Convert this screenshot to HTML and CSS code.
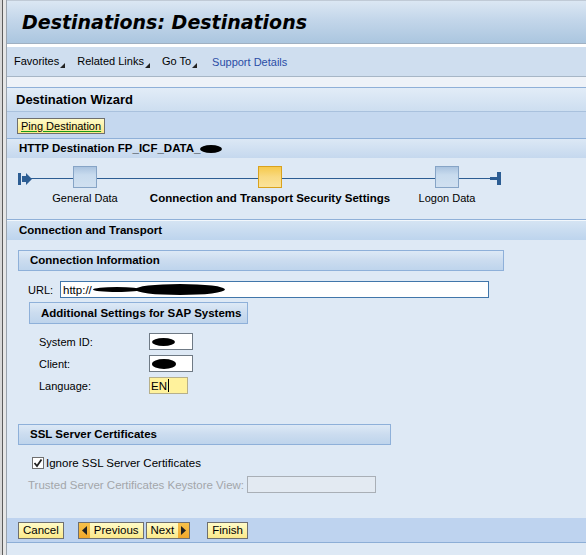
FILE: index.html
```html
<!DOCTYPE html>
<html>
<head>
<meta charset="utf-8">
<link rel="stylesheet" href="styles.css">
</head>
<body>
<div class="frame">
<div class="page">
  <div class="titlebar"><h1>Destinations: Destinations</h1></div>
  <div class="whitegap"></div>
  <div class="toolbar">
    <span class="menu">Favorites<svg class="tri" width="5" height="5" viewBox="0 0 5 5"><polygon points="5,0 5,5 0,5" fill="#222"/></svg></span>
    <span class="menu">Related Links<svg class="tri" width="5" height="5" viewBox="0 0 5 5"><polygon points="5,0 5,5 0,5" fill="#222"/></svg></span>
    <span class="menu">Go To<svg class="tri" width="5" height="5" viewBox="0 0 5 5"><polygon points="5,0 5,5 0,5" fill="#222"/></svg></span>
    <span class="link">Support Details</span>
  </div>
  <div class="spacer"></div>
  <div class="wizard-head">Destination Wizard</div>
  <div class="ping-row"><span class="btn ping"><span class="ul">Ping Destination</span></span></div>
  <div class="step-head">HTTP Destination FP_ICF_DATA_<span class="blob b-title"></span></div>
  <div class="roadmap">
    <div class="rline"></div>
    <svg class="rstart" width="14" height="12" viewBox="0 0 14 12"><rect x="0" y="0" width="3" height="12" fill="#2c5d93"/><polygon points="4,3 8,3 8,0 14,6 8,12 8,9 4,9" fill="#2c5d93"/></svg>
    <div class="step s1"><div class="sbox"></div><div class="slabel">General Data</div></div>
    <div class="step s2"><div class="sbox cur"></div><div class="slabel bold">Connection and Transport Security Settings</div></div>
    <div class="step s3"><div class="sbox"></div><div class="slabel">Logon Data</div></div>
    <svg class="rend" width="12" height="13" viewBox="0 0 12 13"><rect x="0" y="5" width="8" height="3" fill="#2c5d93"/><rect x="7" y="0" width="4" height="13" fill="#2c5d93"/></svg>
  </div>
  <div class="section-head">Connection and Transport</div>
  <div class="content">
    <div class="ghead wide">Connection Information</div>
    <div class="url-row">
      <span class="lbl url-lbl">URL:</span>
      <span class="input url-in">http://<span class="blob b-u1"></span><span class="blob b-u2"></span></span>
    </div>
    <div class="ghead sub">Additional Settings for SAP Systems</div>
    <div class="fields">
      <div class="frow"><span class="lbl flbl">System ID:</span><span class="input small"><span class="blob b-s"></span></span></div>
      <div class="frow"><span class="lbl flbl">Client:</span><span class="input small"><span class="blob b-c"></span></span></div>
      <div class="frow"><span class="lbl flbl">Language:</span><span class="input lang">EN<span class="caret"></span></span></div>
    </div>
    <div class="ghead ssl">SSL Server Certificates</div>
    <div class="cb-row"><span class="cb"><svg width="10" height="10" viewBox="0 0 10 10"><polyline points="1.5,5 4,8 8.5,1.5" fill="none" stroke="#222" stroke-width="1.8"/></svg></span>Ignore SSL Server Certificates</div>
    <div class="ks-row"><span class="lbl dis">Trusted Server Certificates Keystore View:</span><span class="input disabled"></span></div>
  </div>
  <div class="footer">
    <span class="btn">Cancel</span>
    <span class="navgroup">
      <span class="btn prev"><span class="arr"><svg width="5" height="9" viewBox="0 0 5 9"><polygon points="5,0 5,9 0,4.5" fill="#222"/></svg></span>Previous</span>
      <span class="btn next">Next<span class="arr"><svg width="5" height="9" viewBox="0 0 5 9"><polygon points="0,0 0,9 5,4.5" fill="#222"/></svg></span></span>
    </span>
    <span class="btn">Finish</span>
  </div>
  <div class="bottom"></div>
</div>
</div>
</body>
</html>
```
FILE: styles.css
```css
html, body { margin: 0; padding: 0; }
body {
  background: #d8d8d8;
  font-family: "Liberation Sans", Arial, sans-serif;
  font-size: 11px;
  color: #000;
  width: 586px;
  height: 555px;
  overflow: hidden;
}
.frame {
  margin-left: 2px;
  border-left: 1px solid #5c5c5c;
  padding-left: 3px;
  background: #e6e6e6;
  height: 555px;
}
.page {
  border-left: 1px solid #9aa3ad;
  background: #dee9f5;
  height: 555px;
}
.titlebar {
  height: 42px;
  border-top: 1px solid #c0cad6;
  border-bottom: 1px solid #9fb0c2;
  background: linear-gradient(#dbe7f3, #c3d6ea 45%, #abc6df);
  display: flex;
  align-items: center;
}
.titlebar h1 {
  margin: 0 0 0 15px;
  font-family: "DejaVu Sans", Verdana, sans-serif;
  font-weight: bold;
  font-style: italic;
  font-size: 19px;
  color: #000;
}
.whitegap { height: 3px; background: #fff; }
.toolbar {
  height: 29px;
  background: #cfdeef;
  border-bottom: 1px solid #a7b6c6;
  display: flex;
  align-items: center;
  padding-left: 7px;
}
.menu { margin-right: 12px; white-space: nowrap; }
.tri { vertical-align: -3px; margin-left: 1px; }
.link { color: #2a4da6; margin-left: 3px; }
.spacer { height: 10px; background: #eef2f8; }
.wizard-head {
  border-top: 1px solid #8fb0d8;
  height: 23px;
  line-height: 23px;
  padding-left: 9px;
  font-weight: bold;
  font-size: 13px;
  background: linear-gradient(#e2ecf7, #cddef0);
}
.ping-row {
  height: 27px;
  background: #c5d8ef;
  border-top: 1px solid #a9c1dd;
  box-sizing: border-box;
  padding: 6px 0 0 10px;
}
.btn {
  display: inline-flex;
  align-items: center;
  height: 16px;
  box-sizing: border-box;
  border: 1px solid #6f6f6f;
  background: linear-gradient(#fffbc8, #fbe98a);
  padding: 0 4px;
  font-size: 11.5px;
  white-space: nowrap;
}
.ping { padding: 0 3px; font-size: 11px; }
.ul { text-decoration: underline; text-decoration-color: #1a9a1a; }
.step-head {
  height: 20px;
  box-sizing: border-box;
  border-top: 1px solid #8fb0d8;
  line-height: 19px;
  padding-left: 12px;
  font-weight: bold;
  font-size: 11.5px;
  background: linear-gradient(#dce8f5, #c5d8ee);
}
.blob {
  display: inline-block;
  background: #000;
  border-radius: 50%;
  vertical-align: middle;
}
.b-title { width: 22px; height: 8px; }
.roadmap {
  position: relative;
  height: 61px;
  display: flex;
  align-items: flex-start;
  padding-left: 11px;
  background: #dee9f5;
  border-bottom: 1px solid #8fb0d8;
}
.rline {
  position: absolute;
  left: 24px;
  width: 460px;
  top: 20px;
  height: 1px;
  background: #2c5d93;
}
.rstart { margin-top: 15px; position: relative; }
.rend { margin-top: 14px; margin-left: -2px; position: relative; }
.step {
  display: flex;
  flex-direction: column;
  align-items: center;
  position: relative;
}
.s1 { width: 106px; }
.s2 { width: 264px; }
.s3 { width: 90px; }
.sbox {
  margin-top: 8px;
  width: 22px;
  height: 20px;
  border: 1px solid #86a4c6;
  background: linear-gradient(#aac3df, #c8dbee 40%, #d0e0f0);
}
.sbox.cur {
  border-color: #d9a21e;
  background: linear-gradient(#f6c94c, #f9da82 50%, #fbe39b);
}
.slabel { margin-top: 4px; white-space: nowrap; font-size: 11px; }
.slabel.bold { font-weight: bold; font-size: 11.5px; }
.section-head {
  border-top: 1px solid #f2f7fc;
  height: 19px;
  line-height: 19px;
  padding-left: 12px;
  font-weight: bold;
  font-size: 11.5px;
  background: linear-gradient(#d5e4f3, #bdd4ed);
}
.content {
  height: 278px;
  box-sizing: border-box;
  padding: 10px 0 0 11px;
  background: #dee9f5;
}
.ghead {
  box-sizing: border-box;
  border: 1px solid #8eb0d9;
  height: 21px;
  line-height: 19px;
  padding-left: 11px;
  font-weight: bold;
  font-size: 11.5px;
  background: linear-gradient(#dde9f6, #cbdcef 50%, #bed4ec);
}
.ghead.wide { width: 486px; }
.ghead.sub { width: 219px; height: 22px; line-height: 20px; margin: 4px 0 0 11px; }
.ghead.ssl { width: 373px; margin-top: 30px; }
.url-row {
  display: flex;
  align-items: center;
  margin-top: 10px;
  height: 17px;
}
.lbl { white-space: nowrap; }
.url-lbl { width: 32px; padding-left: 10px; box-sizing: border-box; }
.input {
  display: inline-flex;
  align-items: center;
  box-sizing: border-box;
  height: 17px;
  background: #fff;
  border: 1px solid #6f7a85;
  padding-left: 2px;
  font-size: 11.5px;
}
.url-in { width: 429px; margin-left: 10px; border-color: #4176aa; }
.b-u1 { width: 48px; height: 5px; margin-left: 1px; }
.b-u2 { width: 90px; height: 11px; margin-left: -6px; }
.fields { padding: 9px 0 0 21px; }
.frow { display: flex; align-items: center; height: 17px; margin-bottom: 5px; }
.flbl { width: 110px; }
.input.small { width: 44px; }
.b-s { width: 23px; height: 8px; }
.b-c { width: 24px; height: 10px; }
.input.lang { width: 39px; background: #fff29c; border-color: #b7b08a; padding-left: 1px; }
.caret { display: inline-block; width: 1px; height: 13px; background: #000; margin-left: 1px; }
.cb-row {
  display: flex;
  align-items: center;
  margin: 11px 0 0 14px;
  height: 14px;
  font-size: 11.5px;
}
.cb {
  width: 12px;
  height: 12px;
  box-sizing: border-box;
  border: 1px solid #6f6f6f;
  background: #fff;
  display: inline-flex;
  align-items: center;
  justify-content: center;
  margin-right: 2px;
}
.ks-row { display: flex; align-items: center; margin: 6px 0 0 10px; height: 17px; }
.dis { color: #a3a6aa; width: 219px; font-size: 11.5px; }
.input.disabled { width: 129px; background: #e3eaf2; border-color: #a9afb6; }
.footer {
  height: 25px;
  box-sizing: border-box;
  background: #bed3ef;
  border-bottom: 1px solid #8daed6;
  display: flex;
  align-items: center;
  padding-left: 11px;
}
.footer .btn { height: 17px; }
.navgroup { margin-left: 14px; margin-right: 17px; display: inline-flex; gap: 2px; }
.prev { padding-left: 0; }
.next { padding-right: 0; }
.arr {
  display: inline-flex;
  align-items: center;
  justify-content: center;
  width: 11px;
  height: 15px;
  background: linear-gradient(#f6c14c, #f2a82a);
}
.prev .arr { margin-right: 4px; }
.next .arr { margin-left: 4px; }
.bottom { height: 12px; background: #dee9f5; }
```
